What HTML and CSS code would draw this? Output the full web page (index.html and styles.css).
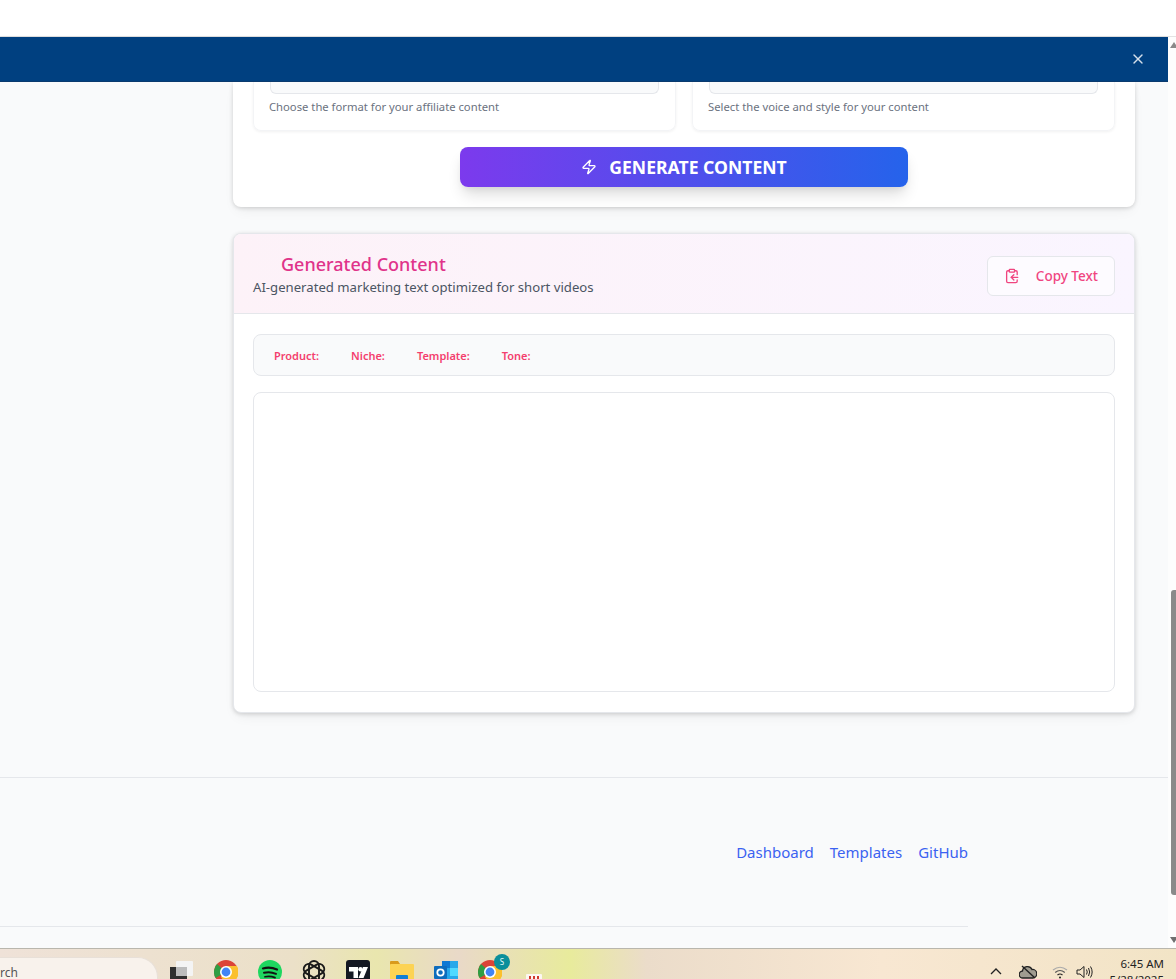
FILE: index.html
```html
<!DOCTYPE html>
<html lang="en">
	<head>
		<meta charset="utf-8">
		<title>Generated Content</title>
		<link rel="stylesheet" href="styles.css">
	</head>
	<body>
		<div class="top-strip"></div>
		<div class="window">
			<div class="page">
				<div class="banner">
					<button class="banner-close" type="button" aria-label="Close">
						<svg width="16" height="16" viewBox="0 0 24 24" fill="none" stroke="currentColor" stroke-width="2" stroke-linecap="round" stroke-linejoin="round"><path d="M18 6 6 18"/><path d="m6 6 12 12"/></svg>
					</button>
				</div>
				<div class="scroll-area">
					<main class="content">
						<section class="card form-card">
							<div class="field-row">
								<div class="field">
									<div class="fake-select"></div>
									<p class="hint">Choose the format for your affiliate content</p>
								</div>
								<div class="field">
									<div class="fake-select"></div>
									<p class="hint">Select the voice and style for your content</p>
								</div>
							</div>
							<button class="generate-btn" type="button">
								<svg width="16" height="16" viewBox="0 0 24 24" fill="none" stroke="currentColor" stroke-width="2" stroke-linecap="round" stroke-linejoin="round"><path d="M4 14a1 1 0 0 1-.78-1.63l9.9-10.2a.5.5 0 0 1 .86.46l-1.92 6.02A1 1 0 0 0 13 10h7a1 1 0 0 1 .78 1.63l-9.9 10.2a.5.5 0 0 1-.86-.46l1.92-6.02A1 1 0 0 0 11 14z"/></svg>
								<span>GENERATE CONTENT</span>
							</button>
						</section>

						<section class="card result-card">
							<header class="result-head">
								<div>
									<h2 class="result-title">Generated Content</h2>
									<p class="result-sub">AI-generated marketing text optimized for short videos</p>
								</div>
								<button class="copy-btn" type="button">
									<svg width="16" height="16" viewBox="0 0 24 24" fill="none" stroke="currentColor" stroke-width="2" stroke-linecap="round" stroke-linejoin="round"><rect x="8" y="2" width="8" height="4" rx="1"/><path d="M8 4H6a2 2 0 0 0-2 2v14a2 2 0 0 0 2 2h12a2 2 0 0 0 2-2v-2"/><path d="M16 4h2a2 2 0 0 1 2 2v4"/><path d="M21 14H11"/><path d="m15 10-4 4 4 4"/></svg>
									<span>Copy Text</span>
								</button>
							</header>
							<div class="result-body">
								<div class="meta-row">
									<span>Product:</span>
									<span>Niche:</span>
									<span>Template:</span>
									<span>Tone:</span>
								</div>
								<div class="output-box"></div>
							</div>
						</section>
					</main>
					<footer class="footer">
						<div class="footer-inner">
							<nav class="footer-links">
								<a href="#">Dashboard</a>
								<a href="#">Templates</a>
								<a href="#">GitHub</a>
							</nav>
							<div class="footer-rule"></div>
						</div>
					</footer>
				</div>
			</div>
			<div class="scrollbar">
				<span class="arrow-up"></span>
				<span class="thumb"></span>
				<span class="arrow-down"></span>
			</div>
		</div>
		<div class="taskbar">
			<div class="search-box">rch</div>
			<div class="task-icons">
				<div class="task-icon">
					<svg width="24" height="24" viewBox="0 0 24 24"><rect x="0" y="7" width="17" height="17" fill="#2f2f2f"/><rect x="6" y="1" width="17" height="15" rx="1" fill="#f4f4f4"/><rect x="6" y="7" width="11" height="9" fill="#bcbcbc"/></svg>
				</div>
				<div class="task-icon">
					<svg width="24" height="24" viewBox="0 0 24 24"><circle cx="12" cy="12" r="12" fill="#db4437"/><path d="M12 12 1.600 18A12 12 0 0 1 3 4l9 8z" fill="#2f9e44"/><path d="M12 6h10.900A12 12 0 0 1 12 24L7 17z" fill="#fbc02d"/><circle cx="12" cy="12" r="6" fill="#fff"/><circle cx="12" cy="12" r="4.400" fill="#4285f4"/></svg>
				</div>
				<div class="task-icon">
					<svg width="24" height="24" viewBox="0 0 24 24"><circle cx="12" cy="12" r="12" fill="#1ed760"/><g fill="none" stroke="#121212" stroke-linecap="round"><path d="M5 8.500q7-2 14 1" stroke-width="2.200"/><path d="M6 12.800q6-1.600 12 1" stroke-width="2"/><path d="M7 16.800q5-1.300 10 .8" stroke-width="1.700"/></g></svg>
				</div>
				<div class="task-icon">
					<svg width="24" height="24" viewBox="0 0 24 24" fill="none" stroke="#1a1a1a" stroke-width="1.900"><rect x="7" y="1" width="10" height="22" rx="5"/><rect x="7" y="1" width="10" height="22" rx="5" transform="rotate(60 12 12)"/><rect x="7" y="1" width="10" height="22" rx="5" transform="rotate(120 12 12)"/></svg>
				</div>
				<div class="task-icon">
					<svg width="24" height="24" viewBox="0 0 24 24"><rect width="24" height="24" rx="3" fill="#131722"/><path d="M3 7h9v11H7.500v-6.500H3z" fill="#fff"/><circle cx="14.500" cy="9.200" r="2.200" fill="#fff"/><path d="M17 7h5l-4.500 11H12.500z" fill="#fff"/></svg>
				</div>
				<div class="task-icon">
					<svg width="24" height="24" viewBox="0 0 24 24"><path d="M0 2a1 1 0 0 1 1-1h7l2 3h13v2H0z" fill="#d99a1c"/><rect y="4" width="24" height="20" rx="1" fill="#fcd354"/><rect x="6" y="15" width="12" height="9" rx="1" fill="#0f7fd6"/></svg>
				</div>
				<div class="task-icon">
					<svg width="24" height="24" viewBox="0 0 24 24"><rect x="8" y="1" width="16" height="22" fill="#28a8ea"/><rect x="8" y="1" width="8" height="7" fill="#0f78d4"/><rect x="16" y="8" width="8" height="8" fill="#50d9ff"/><rect x="0" y="6" width="13" height="13" rx="1" fill="#0f6cbd"/><circle cx="6.500" cy="12.500" r="3.200" fill="none" stroke="#fff" stroke-width="1.800"/></svg>
				</div>
				<div class="task-icon">
					<svg width="24" height="24" viewBox="0 0 24 24"><circle cx="12" cy="12" r="12" fill="#db4437"/><path d="M12 12 1.600 18A12 12 0 0 1 3 4l9 8z" fill="#2f9e44"/><path d="M12 6h10.900A12 12 0 0 1 12 24L7 17z" fill="#fbc02d"/><circle cx="12" cy="12" r="6" fill="#fff"/><circle cx="12" cy="12" r="4.400" fill="#4285f4"/></svg>
					<span class="profile-badge">S</span>
				</div>
				<div class="task-icon">
					<svg class="office-icon" width="16" height="16" viewBox="0 0 16 16"><rect width="16" height="16" rx="1" fill="#fbf7f2"/><path d="M3 2h2v5H3zM7 2h2v5H7zM11 2h2v5h-2z" fill="#d13a2c"/></svg>
				</div>
			</div>
			<div class="tray">
				<svg class="tray-chevron" width="14" height="10" viewBox="0 0 14 10" fill="none" stroke="#222" stroke-width="1.300"><path d="m2 8 5-5 5 5"/></svg>
				<svg class="tray-cloud" width="18" height="14" viewBox="0 0 18 14"><path d="M4 13a3.500 3.500 0 0 1-.5-7A5 5 0 0 1 13 4.500 4.200 4.200 0 0 1 14 13z" fill="#a09c90" stroke="#222" stroke-width="1.300"/><path d="m3 1 13 12" stroke="#222" stroke-width="1.400"/></svg>
				<svg class="tray-wifi" width="16" height="14" viewBox="0 0 16 14" fill="none" stroke-width="1.200"><path d="M1 5q7-5.500 14 0" stroke="#aaa"/><path d="M3.200 7.500q4.800-4 9.600 0" stroke="#555"/><path d="M5.500 10q2.500-2 5 0" stroke="#222"/><circle cx="8" cy="12.500" r="1" fill="#222" stroke="none"/></svg>
				<svg class="tray-sound" width="18" height="14" viewBox="0 0 18 14" fill="none" stroke="#222" stroke-width="1"><path d="M1 5h3l4-3.500v11L4 9H1z"/><path d="M10.500 4.500q1.500 2.500 0 5M12.500 3q2.400 4 0 8M14.500 1.500q3.300 5.500 0 11"/></svg>
				<div class="clock">
					<span>6:45 AM</span>
					<span>5/28/2025</span>
				</div>
			</div>
		</div>
	</body>
</html>
```

FILE: styles.css
```css
* {
	box-sizing: border-box;
}
html, body {
	height: 100%;
}
body {
	margin: 0;
	overflow: hidden;
	display: flex;
	flex-direction: column;
	background: #fff;
	font-family: "Noto Sans", "Open Sans", sans-serif;
	color: #374151;
}
button {
	font-family: inherit;
	cursor: pointer;
}
.top-strip {
	height: 37px;
	flex: none;
	background: #fff;
	border-bottom: 1px solid #e3e3e3;
}
.window {
	flex: 1;
	min-height: 0;
	display: flex;
}
.page {
	flex: 1;
	min-width: 0;
	display: flex;
	flex-direction: column;
}

/* top banner */
.banner {
	height: 45px;
	flex: none;
	display: flex;
	align-items: center;
	justify-content: flex-end;
	padding: 0 22px 0 0;
	background: #004080;
	border-bottom: 1px solid #0a3a6e;
	box-shadow: 0 1px 3px rgba(0,0,0,0.15);
}
.banner-close {
	display: flex;
	padding: 0;
	background: none;
	border: 0;
	color: #d5dfea;
}

.scroll-area {
	flex: 1;
	min-height: 0;
	overflow: hidden;
	background: #f9fafb;
}
.content {
	display: flex;
	flex-direction: column;
	gap: 26px;
	padding: 0 33px 64px 233px;
}
.card {
	background: #fff;
	border-radius: 8px;
	box-shadow: 0 1px 4px rgba(0,0,0,0.16), 0 6px 14px -4px rgba(0,0,0,0.07);
}

/* form card, top part is scrolled under the banner */
.form-card {
	display: flex;
	flex-direction: column;
	align-items: center;
	gap: 16px;
	padding: 0 20px 20px;
	border-radius: 0 0 8px 8px;
}
.field-row {
	align-self: stretch;
	display: grid;
	grid-template-columns: 1fr 1fr;
	gap: 16px;
}
.field {
	padding: 0 16px 14px;
	border: 1px solid #f3f4f6;
	border-top: 0;
	border-radius: 0 0 8px 8px;
	box-shadow: 0 1px 3px rgba(0,0,0,0.06);
}
.fake-select {
	height: 12px;
	border: 1px solid #e5e7eb;
	border-top: 0;
	border-radius: 0 0 6px 6px;
	background: #f9fafb;
}
.hint {
	margin: 4px 0 0 -1px;
	font-size: 11.250px;
	line-height: 18px;
	color: #6b7280;
}
.generate-btn {
	width: 448px;
	height: 40px;
	display: flex;
	align-items: center;
	justify-content: center;
	gap: 12px;
	border: 0;
	border-radius: 8px;
	color: #fff;
	font-size: 17.600px;
	font-weight: 700;
	background: linear-gradient(90deg, #7c3aed, #2563eb);
	box-shadow: 0 10px 15px -3px rgba(0,0,0,0.14), 0 4px 6px -2px rgba(0,0,0,0.06);
}

/* generated content */
.result-card {
	overflow: hidden;
	border: 1px solid #e5e7eb;
}
.result-head {
	height: 80px;
	display: flex;
	align-items: center;
	justify-content: space-between;
	padding: 0 19px;
	border-bottom: 1px solid #e5e7eb;
	background: linear-gradient(90deg, #fdf2f8, #faf5ff);
}
.result-title {
	margin: 0;
	padding-left: 28px;
	font-size: 18px;
	font-weight: 500;
	line-height: 28px;
	color: #e0338a;
}
.result-sub {
	margin: -1px 0 0;
	font-size: 13.150px;
	line-height: 20px;
	color: #4b5563;
}
.copy-btn {
	width: 128px;
	height: 40px;
	margin-top: 4px;
	display: flex;
	align-items: center;
	gap: 16px;
	padding: 0 16px;
	border: 1px solid #e5e7eb;
	border-radius: 6px;
	background: rgba(255,255,255,0.6);
	color: #f0457f;
	font-size: 13.500px;
	font-weight: 500;
	white-space: nowrap;
}
.result-body {
	display: flex;
	flex-direction: column;
	gap: 16px;
	padding: 20px 19px;
}
.meta-row {
	height: 42px;
	display: flex;
	align-items: center;
	gap: 32px;
	padding: 0 20px;
	border: 1px solid #e5e7eb;
	border-radius: 8px;
	background: #f9fafb;
	font-size: 11px;
	font-weight: 600;
	color: #f43f6e;
}
.output-box {
	height: 300px;
	border: 1px solid #e5e7eb;
	border-radius: 8px;
	background: #fff;
}

/* footer */
.footer {
	border-top: 1px solid #e5e7eb;
}
.footer-inner {
	width: 968px;
}
.footer-links {
	display: flex;
	justify-content: flex-end;
	gap: 16px;
	padding: 62px 0;
	line-height: 24px;
	font-size: 15px;
}
.footer-links a {
	color: #3b62f1;
	text-decoration: none;
}
.footer-rule {
	border-top: 1px solid #e5e7eb;
}

/* browser scrollbar */
.scrollbar {
	width: 8px;
	flex: none;
	display: flex;
	flex-direction: column;
	align-items: flex-start;
	background: #fdfdfd;
	padding: 5px 0 0 3px;
}
.arrow-up, .arrow-down {
	width: 0;
	height: 0;
	flex: none;
	border-left: 4px solid transparent;
	border-right: 4px solid transparent;
}
.arrow-up {
	margin-left: -1px;
	border-bottom: 6px solid #8a8a8a;
}
.arrow-down {
	margin: 42px 0 0 -1px;
	border-top: 6px solid #6f6f6f;
}
.thumb {
	width: 5px;
	height: 305px;
	flex: none;
	margin-top: 542px;
	background: #8a8a8a;
	border-radius: 3px 0 0 3px;
}

/* windows taskbar, cut off by the bottom of the screen */
.taskbar {
	height: 31px;
	flex: none;
	display: flex;
	overflow: hidden;
	border-top: 1px solid #b9b6ad;
	background: linear-gradient(90deg, #efe2d8 0%, #ebe0c8 25%, #e9e6ae 32%, #e9d9c8 39%, #e8eb9c 48.500%, #ebdcca 55%, #f8e7d2 75%, #f2e4c6 100%);
}
.search-box {
	width: 158px;
	height: 40px;
	flex: none;
	margin-top: 8px;
	padding: 6px 0 0;
	background: #f8f2ec;
	border: 1px solid #e8e0d8;
	border-left: 0;
	border-radius: 0 20px 20px 0;
	font-size: 12px;
	color: #555;
}
.task-icons {
	display: flex;
	margin-left: 2px;
}
.task-icon {
	position: relative;
	width: 44px;
	flex: none;
	display: flex;
	justify-content: center;
	padding-top: 11px;
}
.profile-badge {
	position: absolute;
	top: 5px;
	left: 26px;
	width: 16px;
	height: 16px;
	border-radius: 50%;
	background: #0b8f9b;
	color: #e8fbfb;
	font-size: 8px;
	line-height: 16px;
	text-align: center;
}
.office-icon {
	margin-top: 14px;
}
.tray {
	flex: 1;
	display: flex;
	justify-content: flex-end;
	align-items: flex-start;
	padding-right: 12px;
}
.tray-chevron {
	margin-top: 17px;
}
.tray-cloud {
	margin: 16px 0 0 16px;
}
.tray-wifi {
	margin: 16px 0 0 15px;
}
.tray-sound {
	margin: 16px 0 0 8px;
}
.clock {
	display: flex;
	flex-direction: column;
	align-items: flex-end;
	margin: 7px 0 0 15px;
	font-size: 11.500px;
	line-height: 16px;
	color: #222;
}
```
